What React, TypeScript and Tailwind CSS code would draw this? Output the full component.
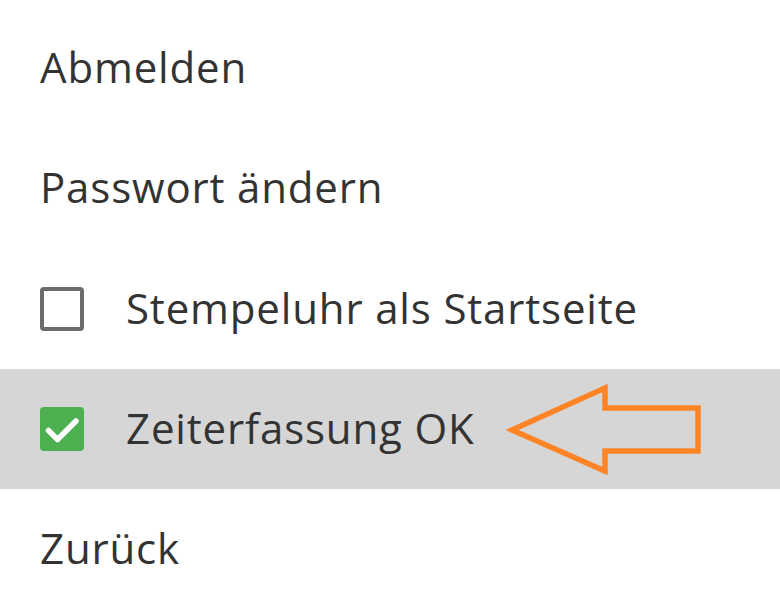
import type { ReactNode } from "react"

function Row({ children, active = false }: { children: ReactNode; active?: boolean }) {
  return (
    <div className={`relative flex h-[120px] items-center px-[40px] ${active ? "bg-[#d6d6d6]" : "bg-white"}`}>
      {children}
    </div>
  )
}

function Box({ checked }: { checked: boolean }) {
  if (checked) {
    return (
      <span className="h-[44px] w-[44px] shrink-0 rounded-[4px] bg-[#4caf50]">
        <svg viewBox="0 0 44 44" className="h-[44px] w-[44px]" fill="none" stroke="white" strokeWidth="5.5" strokeLinecap="round" strokeLinejoin="round">
          <path d="M8.5 23.5l9 9L36 14" />
        </svg>
      </span>
    )
  }
  return <span className="h-[44px] w-[44px] shrink-0 rounded-[4px] border-[4px] border-[#6b6b6b] bg-white" />
}

export default function App() {
  return (
    <div className="h-[600px] w-[780px] overflow-hidden bg-white pt-[9px] text-[#333333] [font-family:'Open_Sans',sans-serif] text-[42px] tracking-[0.02em]">
      <Row><span className="-mt-[6px]">Abmelden</span></Row>
      <Row><span className="-mt-[6px]">Passwort ändern</span></Row>
      <Row>
        <Box checked={false} />
        <span className="ml-[42px] -mt-[4px]">Stempeluhr als Startseite</span>
      </Row>
      <Row active>
        <Box checked />
        <span className="ml-[42px] -mt-[4px]">Zeiterfassung OK</span>
        {/* annotation arrow */}
        <svg className="absolute left-[505px] top-[13px] h-[96px] w-[200px]" viewBox="505 382 200 96" fill="none">
          <path d="M512 430 L605 388 L605 408 L698 408 L698 451 L605 451 L605 471 Z" stroke="#ff8426" strokeWidth="5.5" strokeLinejoin="miter" />
        </svg>
      </Row>
      <Row><span className="-mt-[4px]">Zurück</span></Row>
    </div>
  )
}
